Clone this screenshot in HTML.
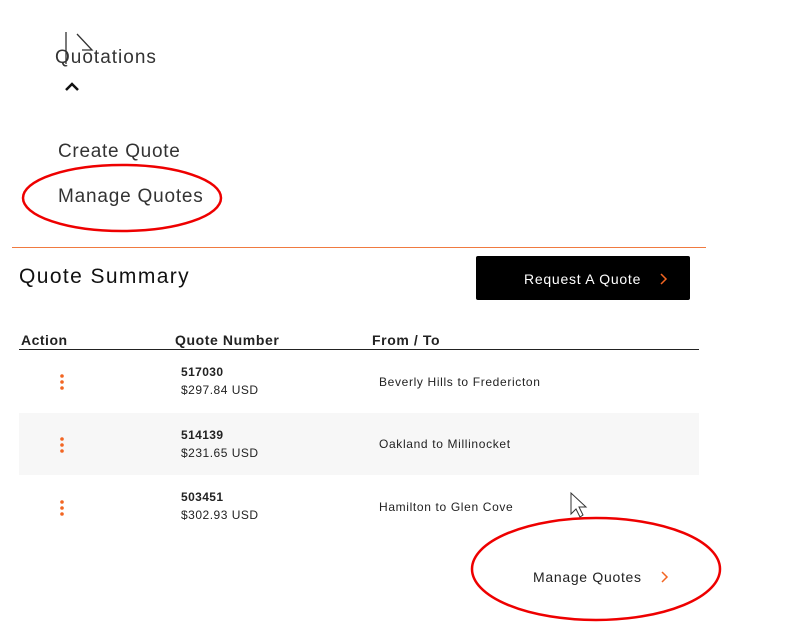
<!DOCTYPE html>
<html><head><meta charset="utf-8"><style>
body{margin:0;width:798px;height:626px;background:#fff;position:relative;overflow:hidden;font-family:"Liberation Sans",sans-serif;color:#222}
.a{position:absolute;white-space:nowrap}
</style></head><body>
<div class="a" style="left:55px;top:47px;font-size:19px;color:#333;letter-spacing:1px">Quotations</div>
<svg class="a" style="left:60px;top:30px" width="40" height="40"><path d="M6 2V34M17 4L32 20H22" stroke="#333" stroke-width="1.3" fill="none"/></svg>
<svg class="a" style="left:64px;top:81px" width="16" height="12"><path d="M2 9L8 3L14 9" stroke="#111" stroke-width="2.5" fill="none"/></svg>
<div class="a" style="left:58px;top:141px;font-size:19px;color:#333;letter-spacing:0.7px">Create Quote</div>
<div class="a" style="left:58px;top:186px;font-size:19px;color:#333;letter-spacing:0.8px">Manage Quotes</div>
<svg class="a" style="left:0;top:0" width="798" height="626"><ellipse cx="122" cy="198" rx="99" ry="33" stroke="#e00" stroke-width="2.5" fill="none"/><ellipse cx="596" cy="569" rx="124" ry="51" stroke="#e00" stroke-width="2.5" fill="none"/><path d="M571 493V514L576 509L580 517L583 515L579 507L586 507Z" fill="#fff" stroke="#333" stroke-width="1"/></svg>
<div class="a" style="left:12px;top:247px;width:694px;height:1px;background:#f07a40"></div>
<div class="a" style="left:19px;top:265px;font-size:21px;color:#111;letter-spacing:1.4px">Quote Summary</div>
<div class="a" style="left:476px;top:256px;width:214px;height:44px;background:#000;border-radius:2px"></div>
<div class="a" style="left:524px;top:271px;font-size:14px;color:#fff;letter-spacing:0.75px">Request A Quote</div>
<svg class="a" style="left:659px;top:272px" width="10" height="14"><path d="M2 2L7 7L2 12" stroke="#f26522" stroke-width="1.5" fill="none"/></svg>
<div class="a" style="left:21px;top:332px;font-size:14px;font-weight:bold;color:#222;letter-spacing:0.5px">Action</div>
<div class="a" style="left:175px;top:332px;font-size:14px;font-weight:bold;color:#222;letter-spacing:0.6px">Quote Number</div>
<div class="a" style="left:372px;top:332px;font-size:14px;font-weight:bold;color:#222;letter-spacing:0.6px">From / To</div>
<div class="a" style="left:19px;top:349px;width:680px;height:1px;background:#222"></div>
<div class="a" style="left:19px;top:413px;width:680px;height:62px;background:#f7f7f7"></div>
<svg class="a" style="left:58px;top:373px" width="8" height="150"><g fill="#f26522"><circle cx="4" cy="3" r="1.8"/><circle cx="4" cy="9" r="1.8"/><circle cx="4" cy="15" r="1.8"/><circle cx="4" cy="66" r="1.8"/><circle cx="4" cy="72" r="1.8"/><circle cx="4" cy="78" r="1.8"/><circle cx="4" cy="129" r="1.8"/><circle cx="4" cy="135" r="1.8"/><circle cx="4" cy="141" r="1.8"/></g></svg>
<div class="a" style="left:181px;top:365px;font-size:12px;font-weight:bold;letter-spacing:0.4px">517030</div>
<div class="a" style="left:181px;top:383px;font-size:12px;letter-spacing:0.5px">$297.84 USD</div>
<div class="a" style="left:379px;top:375px;font-size:12px;letter-spacing:0.65px">Beverly Hills to Fredericton</div>
<div class="a" style="left:181px;top:428px;font-size:12px;font-weight:bold;letter-spacing:0.4px">514139</div>
<div class="a" style="left:181px;top:446px;font-size:12px;letter-spacing:0.5px">$231.65 USD</div>
<div class="a" style="left:379px;top:437px;font-size:12px;letter-spacing:0.65px">Oakland to Millinocket</div>
<div class="a" style="left:181px;top:490px;font-size:12px;font-weight:bold;letter-spacing:0.4px">503451</div>
<div class="a" style="left:181px;top:508px;font-size:12px;letter-spacing:0.5px">$302.93 USD</div>
<div class="a" style="left:379px;top:500px;font-size:12px;letter-spacing:0.65px">Hamilton to Glen Cove</div>
<div class="a" style="left:533px;top:569px;font-size:14px;color:#222;letter-spacing:0.7px">Manage Quotes</div>
<svg class="a" style="left:660px;top:570px" width="10" height="14"><path d="M2 2L7 7L2 12" stroke="#f26522" stroke-width="1.5" fill="none"/></svg>
</body></html>
